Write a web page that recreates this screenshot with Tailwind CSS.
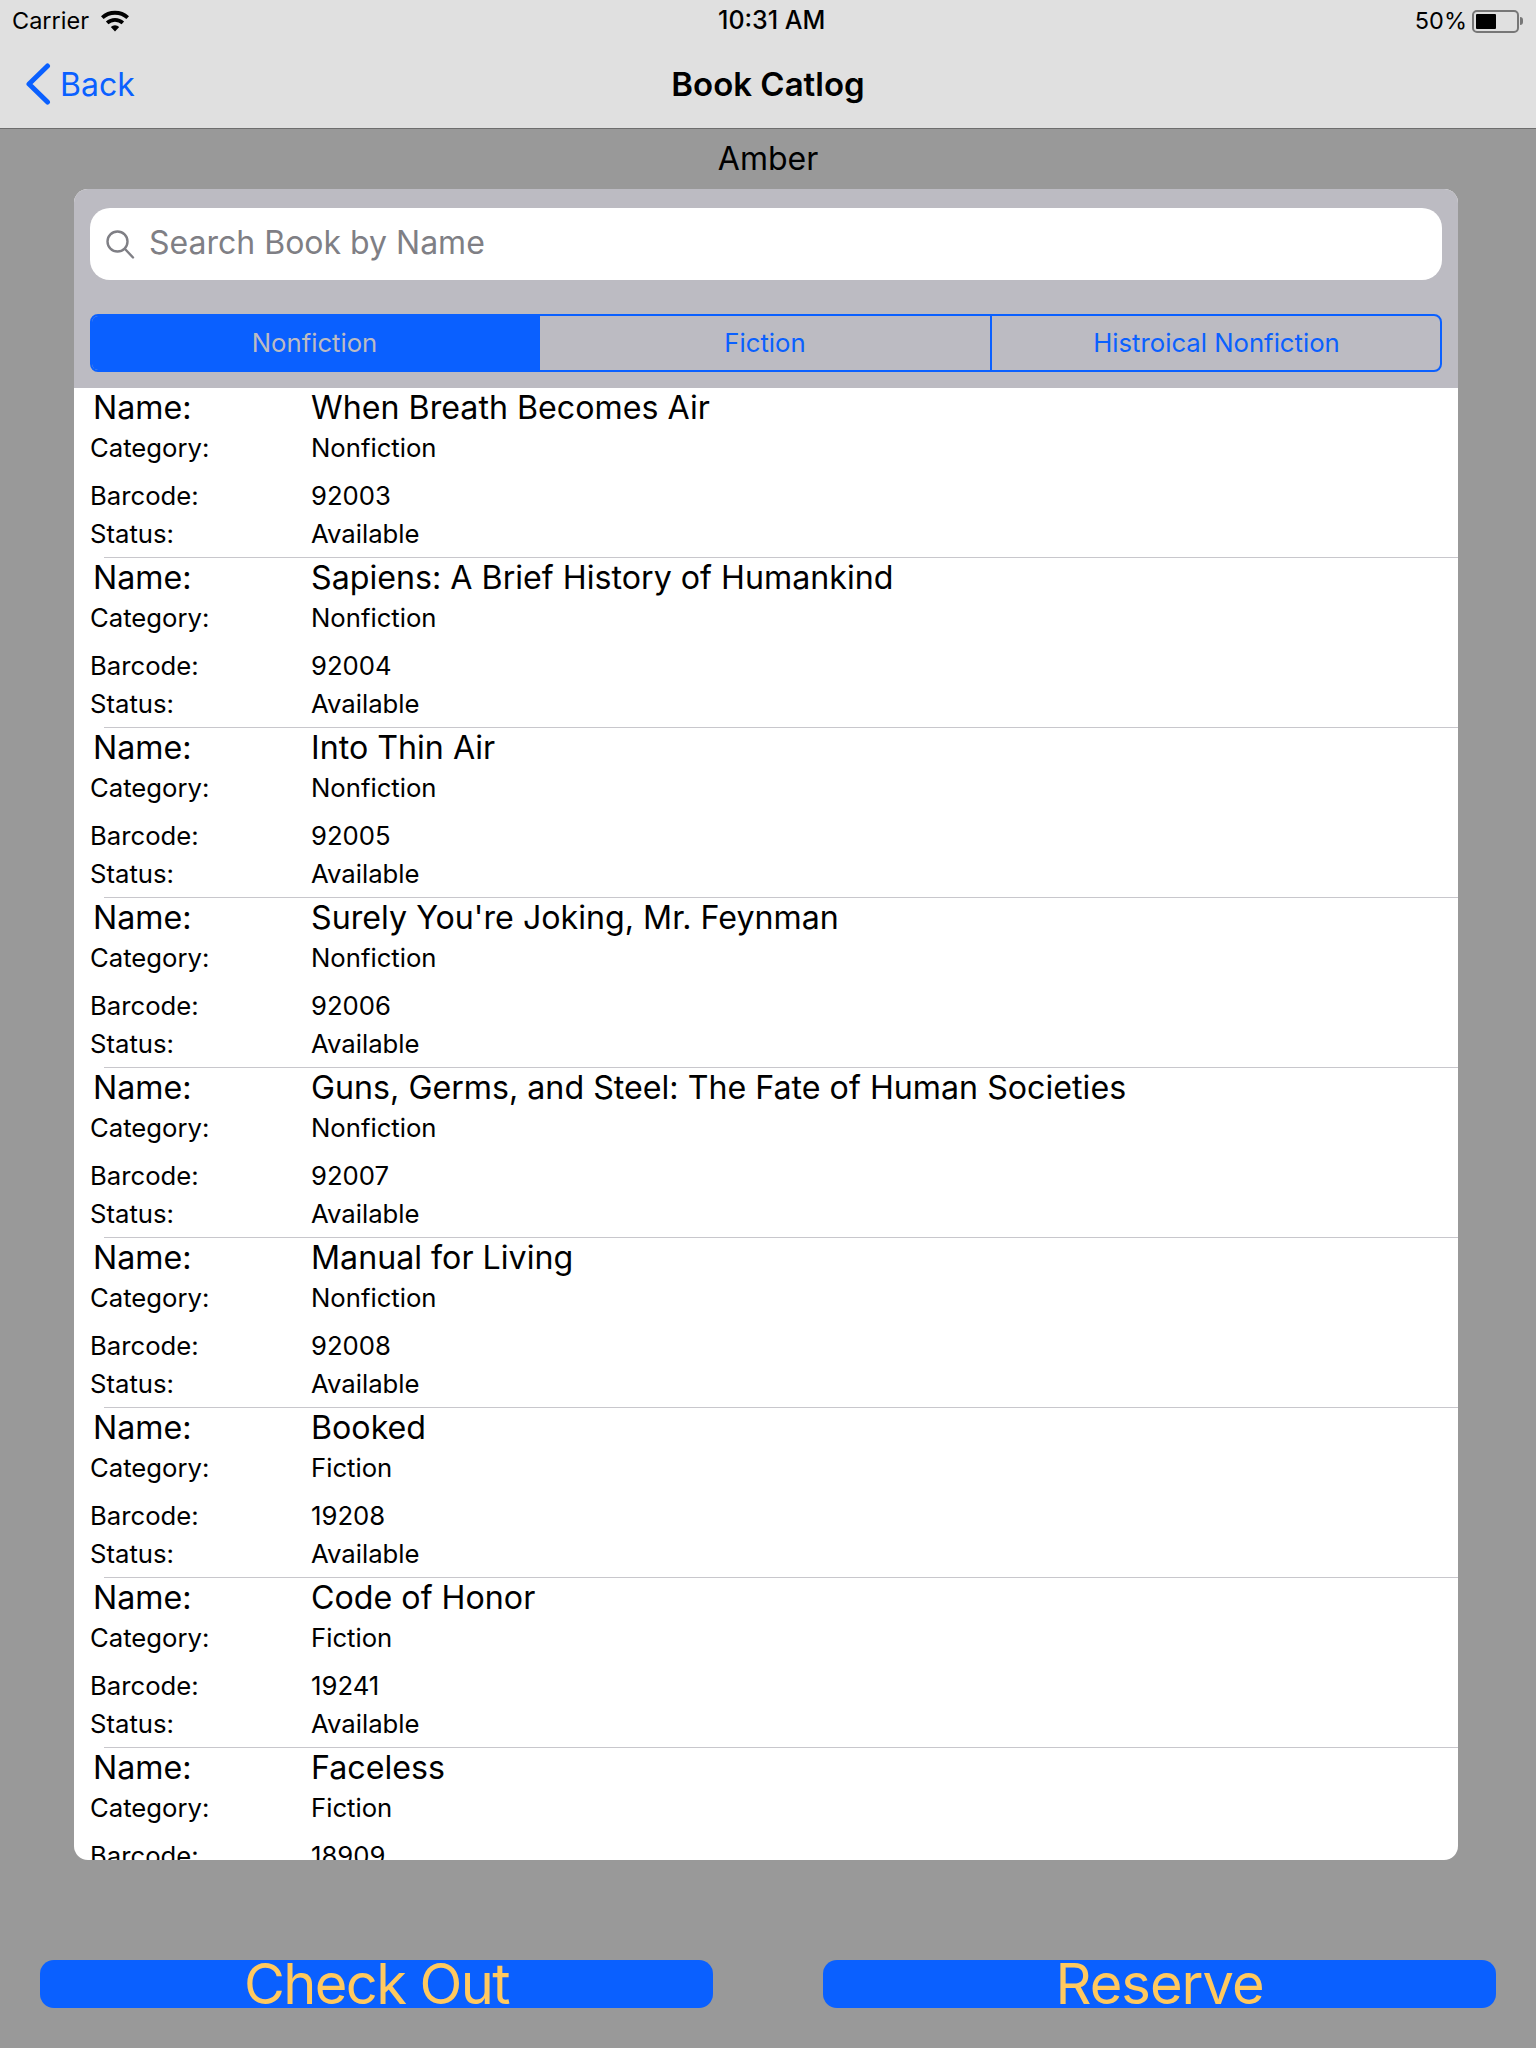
<!DOCTYPE html>
<html lang="en">
<head>
    <meta charset="UTF-8">
    <title>Book Catlog</title>
    <script src="https://cdn.jsdelivr.net/npm/@tailwindcss/browser@4"></script>
</head>
<body class="bg-[#999999] text-black font-[Inter,sans-serif]">
<div class="w-[1536px] h-[2048px] flex flex-col overflow-hidden">
    <!-- Status + nav bar -->
    <header class="h-[129px] bg-[#e0e0e0] border-b border-[#6e6e6e] shrink-0">
        <div class="h-[42px] -mb-[2px] relative flex items-center justify-between pl-[12px] pr-[13px] text-[23.5px]">
            <div class="flex items-center gap-[11px]">
                <span>Carrier</span>
                <svg class="w-[30px] h-[22px]" viewBox="0 0 30 22"><path d="M15 21.5l-4.2-4.6a6.2 6.2 0 0 1 8.4 0zM8.4 14.3L5.9 11.6a13.4 13.4 0 0 1 18.2 0l-2.5 2.7a9.8 9.8 0 0 0-13.2 0zM3.6 9.1L1 6.3a20.6 20.6 0 0 1 28 0l-2.6 2.8a16.9 16.9 0 0 0-22.8 0z" fill="#000"/></svg>
            </div>
            <span class="absolute left-[718px] font-medium text-[25px]">10:31 AM</span>
            <div class="flex items-center gap-[5px]">
                <span>50%</span>
                <div class="w-[47px] h-[23px] border-2 border-[#777] rounded-[5px] p-[2px]">
                    <div class="w-[20px] h-full bg-black rounded-[1px]"></div>
                </div>
                <div class="w-[3px] h-[8px] bg-[#777] -ml-[4px] rounded-r-full"></div>
            </div>
        </div>
        <nav class="h-[88px] relative flex items-center justify-center">
            <div class="absolute left-[25px] flex items-center gap-[9px] text-[#0a60ff] text-[32px]">
                <svg class="w-[26px] h-[42px]" viewBox="0 0 26 42"><path d="M22.5 3L4 21l18.5 18" fill="none" stroke="#0a60ff" stroke-width="5" stroke-linecap="round" stroke-linejoin="round"/></svg>
                <span class="pt-[2px]">Back</span>
            </div>
            <h1 class="text-[33px] font-semibold pt-[2px]">Book Catlog</h1>
        </nav>
    </header>

    <main class="flex-1 flex flex-col">
        <p class="h-[60px] flex items-center justify-center text-[32px]">Amber</p>

        <!-- Catalog card -->
        <section class="ml-[74px] w-[1384px] h-[1671px] bg-white rounded-[14px] overflow-hidden flex flex-col">
            <div class="h-[199px] shrink-0 bg-[#bcbbc2] px-[16px] pt-[19px]">
                <div class="h-[72px] bg-white rounded-[20px] flex items-center pl-[15px] gap-[14px] text-[32px] text-[#7f7f85]">
                    <svg class="w-[30px] h-[30px]" viewBox="0 0 30 30" fill="none" stroke="#7f7f85" stroke-width="2.4" stroke-linecap="round"><circle cx="12.5" cy="12.5" r="10"/><path d="M20 20l8 8.5"/></svg>
                    <span class="-mt-[2px]">Search Book by Name</span>
                </div>
                <div class="mt-[34px] h-[58px] flex border-2 border-[#0a60ff] rounded-[8px] overflow-hidden text-[25.7px] text-[#0a60ff]">
                    <div class="w-[448px] pr-[3px] bg-[#0a60ff] text-[#bcbbc2] flex items-center justify-center">Nonfiction</div>
                    <div class="w-[452px] border-r-2 border-[#0a60ff] flex items-center justify-center">Fiction</div>
                    <div class="flex-1 pl-[1px] flex items-center justify-center">Histroical Nonfiction</div>
                </div>
            </div>

            <div class="flex-1 overflow-hidden">
                <div class="h-[170px] relative">
                    <div class="h-[40px] -mb-[2px] flex items-center text-[32.2px]"><span class="w-[237px] pl-[19px]">Name:</span><span>When Breath Becomes Air</span></div>
                    <div class="mt-[2px] h-[40px] flex items-center text-[25.7px]"><span class="w-[237px] pl-[16px]">Category:</span><span>Nonfiction</span></div>
                    <div class="mt-[8px] h-[40px] flex items-center text-[25.7px]"><span class="w-[237px] pl-[16px]">Barcode:</span><span>92003</span></div>
                    <div class="h-[36px] flex items-center text-[25.7px]"><span class="w-[237px] pl-[16px]">Status:</span><span>Available</span></div>
                    <div class="absolute bottom-0 left-[30px] right-0 h-px bg-[#c8c7cc]"></div>
                </div>
                <div class="h-[170px] relative">
                    <div class="h-[40px] -mb-[2px] flex items-center text-[32.2px]"><span class="w-[237px] pl-[19px]">Name:</span><span>Sapiens: A Brief History of Humankind</span></div>
                    <div class="mt-[2px] h-[40px] flex items-center text-[25.7px]"><span class="w-[237px] pl-[16px]">Category:</span><span>Nonfiction</span></div>
                    <div class="mt-[8px] h-[40px] flex items-center text-[25.7px]"><span class="w-[237px] pl-[16px]">Barcode:</span><span>92004</span></div>
                    <div class="h-[36px] flex items-center text-[25.7px]"><span class="w-[237px] pl-[16px]">Status:</span><span>Available</span></div>
                    <div class="absolute bottom-0 left-[30px] right-0 h-px bg-[#c8c7cc]"></div>
                </div>
                <div class="h-[170px] relative">
                    <div class="h-[40px] -mb-[2px] flex items-center text-[32.2px]"><span class="w-[237px] pl-[19px]">Name:</span><span>Into Thin Air</span></div>
                    <div class="mt-[2px] h-[40px] flex items-center text-[25.7px]"><span class="w-[237px] pl-[16px]">Category:</span><span>Nonfiction</span></div>
                    <div class="mt-[8px] h-[40px] flex items-center text-[25.7px]"><span class="w-[237px] pl-[16px]">Barcode:</span><span>92005</span></div>
                    <div class="h-[36px] flex items-center text-[25.7px]"><span class="w-[237px] pl-[16px]">Status:</span><span>Available</span></div>
                    <div class="absolute bottom-0 left-[30px] right-0 h-px bg-[#c8c7cc]"></div>
                </div>
                <div class="h-[170px] relative">
                    <div class="h-[40px] -mb-[2px] flex items-center text-[32.2px]"><span class="w-[237px] pl-[19px]">Name:</span><span>Surely You're Joking, Mr. Feynman</span></div>
                    <div class="mt-[2px] h-[40px] flex items-center text-[25.7px]"><span class="w-[237px] pl-[16px]">Category:</span><span>Nonfiction</span></div>
                    <div class="mt-[8px] h-[40px] flex items-center text-[25.7px]"><span class="w-[237px] pl-[16px]">Barcode:</span><span>92006</span></div>
                    <div class="h-[36px] flex items-center text-[25.7px]"><span class="w-[237px] pl-[16px]">Status:</span><span>Available</span></div>
                    <div class="absolute bottom-0 left-[30px] right-0 h-px bg-[#c8c7cc]"></div>
                </div>
                <div class="h-[170px] relative">
                    <div class="h-[40px] -mb-[2px] flex items-center text-[32.2px]"><span class="w-[237px] pl-[19px]">Name:</span><span>Guns, Germs, and Steel: The Fate of Human Societies</span></div>
                    <div class="mt-[2px] h-[40px] flex items-center text-[25.7px]"><span class="w-[237px] pl-[16px]">Category:</span><span>Nonfiction</span></div>
                    <div class="mt-[8px] h-[40px] flex items-center text-[25.7px]"><span class="w-[237px] pl-[16px]">Barcode:</span><span>92007</span></div>
                    <div class="h-[36px] flex items-center text-[25.7px]"><span class="w-[237px] pl-[16px]">Status:</span><span>Available</span></div>
                    <div class="absolute bottom-0 left-[30px] right-0 h-px bg-[#c8c7cc]"></div>
                </div>
                <div class="h-[170px] relative">
                    <div class="h-[40px] -mb-[2px] flex items-center text-[32.2px]"><span class="w-[237px] pl-[19px]">Name:</span><span>Manual for Living</span></div>
                    <div class="mt-[2px] h-[40px] flex items-center text-[25.7px]"><span class="w-[237px] pl-[16px]">Category:</span><span>Nonfiction</span></div>
                    <div class="mt-[8px] h-[40px] flex items-center text-[25.7px]"><span class="w-[237px] pl-[16px]">Barcode:</span><span>92008</span></div>
                    <div class="h-[36px] flex items-center text-[25.7px]"><span class="w-[237px] pl-[16px]">Status:</span><span>Available</span></div>
                    <div class="absolute bottom-0 left-[30px] right-0 h-px bg-[#c8c7cc]"></div>
                </div>
                <div class="h-[170px] relative">
                    <div class="h-[40px] -mb-[2px] flex items-center text-[32.2px]"><span class="w-[237px] pl-[19px]">Name:</span><span>Booked</span></div>
                    <div class="mt-[2px] h-[40px] flex items-center text-[25.7px]"><span class="w-[237px] pl-[16px]">Category:</span><span>Fiction</span></div>
                    <div class="mt-[8px] h-[40px] flex items-center text-[25.7px]"><span class="w-[237px] pl-[16px]">Barcode:</span><span>19208</span></div>
                    <div class="h-[36px] flex items-center text-[25.7px]"><span class="w-[237px] pl-[16px]">Status:</span><span>Available</span></div>
                    <div class="absolute bottom-0 left-[30px] right-0 h-px bg-[#c8c7cc]"></div>
                </div>
                <div class="h-[170px] relative">
                    <div class="h-[40px] -mb-[2px] flex items-center text-[32.2px]"><span class="w-[237px] pl-[19px]">Name:</span><span>Code of Honor</span></div>
                    <div class="mt-[2px] h-[40px] flex items-center text-[25.7px]"><span class="w-[237px] pl-[16px]">Category:</span><span>Fiction</span></div>
                    <div class="mt-[8px] h-[40px] flex items-center text-[25.7px]"><span class="w-[237px] pl-[16px]">Barcode:</span><span>19241</span></div>
                    <div class="h-[36px] flex items-center text-[25.7px]"><span class="w-[237px] pl-[16px]">Status:</span><span>Available</span></div>
                    <div class="absolute bottom-0 left-[30px] right-0 h-px bg-[#c8c7cc]"></div>
                </div>
                <div class="h-[170px] relative">
                    <div class="h-[40px] -mb-[2px] flex items-center text-[32.2px]"><span class="w-[237px] pl-[19px]">Name:</span><span>Faceless</span></div>
                    <div class="mt-[2px] h-[40px] flex items-center text-[25.7px]"><span class="w-[237px] pl-[16px]">Category:</span><span>Fiction</span></div>
                    <div class="mt-[8px] h-[40px] flex items-center text-[25.7px]"><span class="w-[237px] pl-[16px]">Barcode:</span><span>18909</span></div>
                </div>
            </div>
        </section>

        <!-- Actions -->
        <div class="mt-[100px] pl-[40px] flex gap-[110px]">
            <button class="w-[673px] h-[48px] bg-[#0a60ff] rounded-[14px] text-[#ffc95f] text-[56px] leading-[48px] font-normal tracking-[-1.6px]">Check Out</button>
            <button class="w-[673px] h-[48px] bg-[#0a60ff] rounded-[14px] text-[#ffc95f] text-[56px] leading-[48px] font-normal tracking-[-1px]">Reserve</button>
        </div>
    </main>
</div>
</body>
</html>
